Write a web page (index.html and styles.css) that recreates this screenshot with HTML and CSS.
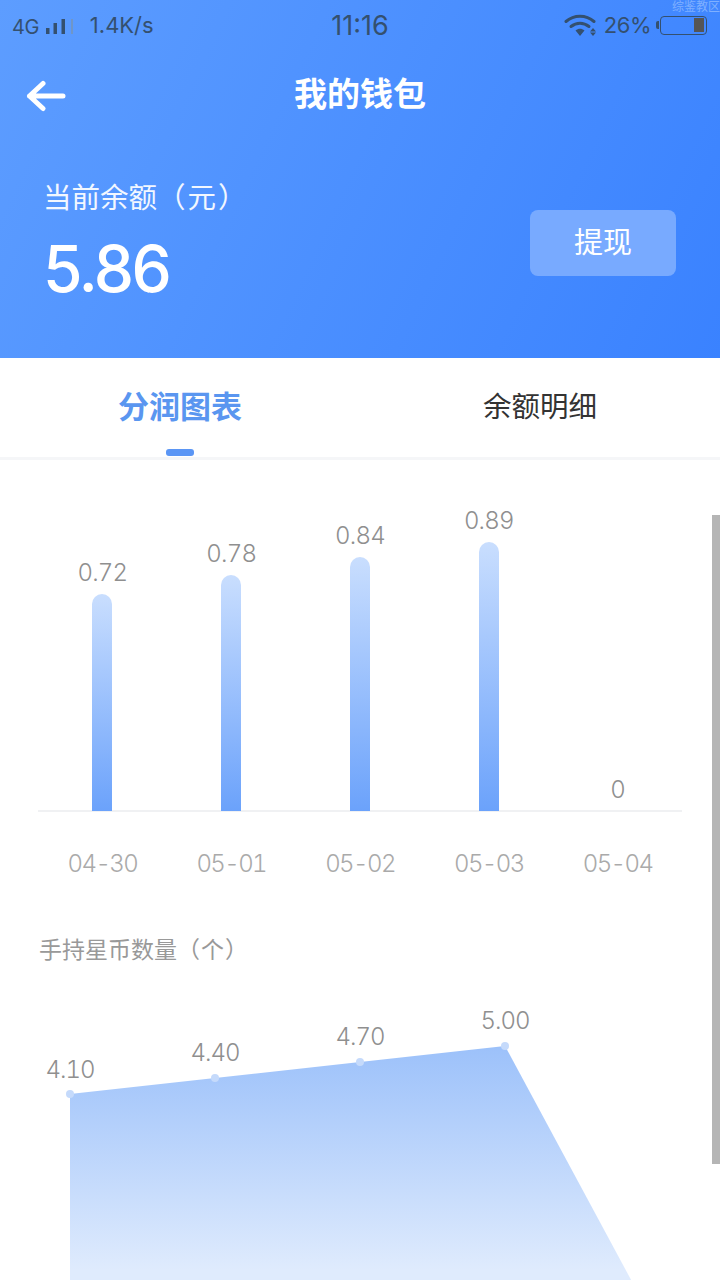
FILE: index.html
```html
<!DOCTYPE html>
<html lang="zh">
<head>
<meta charset="utf-8">
<title>我的钱包</title>
<link rel="stylesheet" href="styles.css">
</head>
<body>
<div class="page">
  <header class="hero">
    <div class="status">
      <div class="status-left">
        <span class="net">4G</span>
        <svg class="signal" width="28" height="16" viewBox="0 0 28 16"><rect x="0" y="10" width="3.500" height="6" fill="#34506f"/><rect x="7.500" y="5" width="3.500" height="11" fill="#34506f"/><rect x="15.500" y="1" width="3.500" height="15" fill="#34506f"/><rect x="25" y="1" width="2" height="15" fill="#6f96c8"/></svg>
        <span class="speed">1.4K/s</span>
      </div>
      <span class="time">11:16</span>
      <div class="status-right">
        <svg class="wifi" width="34" height="24" viewBox="0 0 34 24"><path d="M2 8.500C10 1.500 22 1.500 30 8.500" fill="none" stroke="#34506f" stroke-width="3" stroke-linecap="round"/><path d="M7 13.500C12.500 9 19.500 9 25 13.500" fill="none" stroke="#34506f" stroke-width="3" stroke-linecap="round"/><path d="M11.500 17.500C14.500 15 17.500 15 20.500 17.500L16 23Z" fill="#34506f"/><path d="M29 15l3 3.500h-6zM26 19.500h6l-3 3.500z" fill="#34506f"/></svg>
        <span class="pct">26%</span>
        <div class="battery"><span class="battery-cap"></span><div class="battery-body"><span class="battery-level"></span></div></div>
      </div>
    </div>
    <span class="mark">综鉴教区</span>
    <div class="nav">
      <svg class="back" width="40" height="32" viewBox="0 0 40 32"><path d="M37 16H3.500M17 3.500L3.500 16L17 28.500" fill="none" stroke="#fff" stroke-width="5" stroke-linecap="round" stroke-linejoin="round"/></svg>
      <h1 class="title">我的钱包</h1>
    </div>
    <div class="balance">
      <div>
        <div class="balance-label">当前余额<span class="paren">（元）</span></div>
        <div class="balance-value">5.86</div>
      </div>
      <div class="withdraw">提现</div>
    </div>
  </header>

  <nav class="tabs">
    <div class="tab tab-active">分润图表<span class="tab-bar"></span></div>
    <div class="tab">余额明细</div>
  </nav>

  <section class="bars">
    <div class="plot">
      <div class="col"><span class="val">0.72</span><span class="bar bar-72"></span></div>
      <div class="col"><span class="val">0.78</span><span class="bar bar-78"></span></div>
      <div class="col"><span class="val">0.84</span><span class="bar bar-84"></span></div>
      <div class="col"><span class="val">0.89</span><span class="bar bar-89"></span></div>
      <div class="col"><span class="val val-zero">0</span></div>
    </div>
    <div class="dates">
      <span>04-30</span><span>05-01</span><span>05-02</span><span>05-03</span><span>05-04</span>
    </div>
  </section>

  <h2 class="sub">手持星币数量<span class="paren paren-sub">（个）</span></h2>

  <svg class="area" width="720" height="310" viewBox="0 0 720 310">
    <defs>
      <linearGradient id="af" x1="0" y1="66" x2="0" y2="290" gradientUnits="userSpaceOnUse">
        <stop offset="0" stop-color="#9cc1fa"/>
        <stop offset="1" stop-color="#dfebfd"/>
      </linearGradient>
    </defs>
    <path d="M70 114L215 98L360 82L505 66L650 335H70Z" fill="url(#af)"/>
    <circle cx="70" cy="114" r="4" fill="#c5dafb"/>
    <circle cx="215" cy="98" r="4" fill="#c5dafb"/>
    <circle cx="360" cy="82" r="4" fill="#c5dafb"/>
    <circle cx="505" cy="66" r="4" fill="#c5dafb"/>
    <text class="area-val" x="70" y="98">4.10</text>
    <text class="area-val" x="215" y="81">4.40</text>
    <text class="area-val" x="360" y="65">4.70</text>
    <text class="area-val" x="505" y="49">5.00</text>
  </svg>

  <div class="scrollbar"></div>
</div>
</body>
</html>
```

FILE: styles.css
```css
* { box-sizing: border-box; margin: 0; padding: 0; }
html, body { width: 720px; height: 1280px; overflow: hidden; background: #fff; }
body { font-family: Inter, "Noto Sans CJK SC", sans-serif; }
.page { position: relative; width: 720px; height: 1280px; overflow: hidden; background: #fff; }
.paren { font-family: "Noto Sans CJK TC", sans-serif; line-height: 1; letter-spacing: 2px; }
.paren-sub { letter-spacing: 1px; }

.hero { position: relative; height: 358px; background: linear-gradient(115deg, #5d9dff 0%, #3a82ff 100%); color: #fff; }
.status { position: relative; display: flex; align-items: center; justify-content: space-between; height: 50px; padding: 0 13px 0 12px; color: #34506f; }
.status-left { display: flex; align-items: center; width: 220px; }
.net { font-size: 20px; letter-spacing: -0.5px; margin-top: 3px; }
.signal { margin: 2px 0 0 7px; }
.speed { font-size: 22px; margin-left: 16px; }
.time { font-size: 27px; position: absolute; left: 0; right: 0; text-align: center; }
.status-right { display: flex; align-items: center; }
.wifi { margin-right: 6px; }
.pct { font-size: 22px; letter-spacing: -0.5px; }
.battery { display: flex; align-items: center; margin-left: 5px; }
.battery-cap { width: 3px; height: 8px; background: #34506f; border-radius: 2px 0 0 2px; }
.battery-body { display: flex; justify-content: flex-end; width: 47px; height: 19px; border: 1.500px solid #34506f; border-radius: 4px; padding: 1.500px 2px; margin-left: 1px; }
.battery-level { width: 10px; background: #555; }
.mark { position: absolute; top: -3px; right: 0; font-size: 12px; color: #7fb0ff; }

.nav { display: flex; align-items: center; justify-content: center; position: relative; height: 90px; padding-bottom: 6px; }
.back { position: absolute; left: 26px; top: 30px; }
.title { font-size: 33px; font-weight: 700; color: #fff; }

.balance { display: flex; align-items: center; justify-content: space-between; padding: 38px 44px 0 43px; }
.balance-label { font-size: 28.500px; line-height: 40px; color: #f2f7ff; }
.balance-value { font-size: 64px; line-height: 72px; font-weight: 500; margin-top: 15px; letter-spacing: -2.500px; }
.withdraw { width: 146px; height: 66px; line-height: 66px; text-align: center; font-size: 29px; background: #78aaff; border-radius: 8px; margin-top: 3px; }

.tabs { display: flex; height: 102px; border-bottom: 3px solid #f5f6f8; }
.tab { position: relative; flex: 1; text-align: center; font-size: 28.500px; line-height: 98px; color: #333; }
.tab-active { color: #5a96f0; font-size: 31px; line-height: 97px; font-weight: 700; }
.tab-bar { position: absolute; left: 166px; top: 91px; width: 28px; height: 7px; background: #5b96f5; border-radius: 3px; }

.bars { padding: 0 38px; }
.plot { display: flex; align-items: flex-end; height: 352px; border-bottom: 2px solid #f0f1f3; }
.col { flex: 1; display: flex; flex-direction: column; align-items: center; justify-content: flex-end; margin-bottom: -1px; }
.val { font-size: 24px; line-height: 30px; font-weight: 300; color: #8f8f8f; margin-bottom: 6px; letter-spacing: -0.8px; font-variant-numeric: tabular-nums; }
.val-zero { margin-bottom: 6px; }
.bar { width: 20px; border-radius: 10px 10px 0 0; background: linear-gradient(180deg, #c9defe 0%, #6ba2fb 100%); }
.bar-72 { height: 217px; }
.bar-78 { height: 236px; }
.bar-84 { height: 254px; }
.bar-89 { height: 269px; }
.dates { display: flex; padding-top: 36px; }
.dates span { flex: 1; text-align: center; font-size: 24px; line-height: 32px; font-weight: 300; color: #aaa; letter-spacing: -1.600px; font-variant-numeric: tabular-nums; }

.sub { font-size: 23px; font-weight: 400; line-height: 32px; color: #999; padding: 54px 0 0 39px; }

.area { display: block; margin-top: 14px; }
.area-val { font-size: 24px; font-weight: 300; fill: #8f8f8f; text-anchor: middle; letter-spacing: -1px; font-family: Inter, sans-serif; font-variant-numeric: tabular-nums; }

.scrollbar { position: absolute; right: 0; top: 515px; width: 8px; height: 649px; background: #b5b5b5; }
```
